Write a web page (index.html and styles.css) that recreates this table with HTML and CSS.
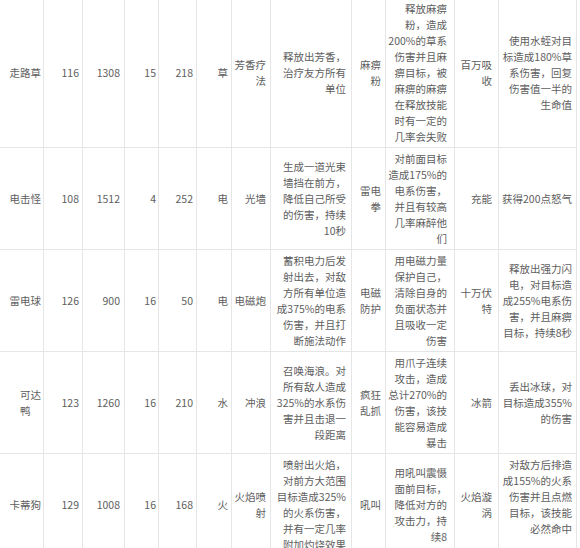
FILE: index.html
```html
<!DOCTYPE html>
<html lang="zh-CN">
<head>
<meta charset="utf-8">
<title>宠物技能表</title>
<link rel="stylesheet" href="styles.css">
</head>
<body>
<table class="pet-table">
<colgroup>
<col class="c1"><col class="c2"><col class="c3"><col class="c4"><col class="c5"><col class="c6"><col class="c7"><col class="c8"><col class="c9"><col class="c10"><col class="c11"><col class="c12">
</colgroup>
<tbody>
<tr>
<td>走路草</td><td>116</td><td>1308</td><td>15</td><td>218</td><td>草</td>
<td>芳香疗<br>法</td>
<td>释放出芳香，<br>治疗友方所有<br>单位</td>
<td>麻痹<br>粉</td>
<td>释放麻痹<br>粉，造成<br>200%的草系<br>伤害并且麻<br>痹目标，被<br>麻痹的麻痹<br>在释放技能<br>时有一定的<br>几率会失败</td>
<td>百万吸<br>收</td>
<td>使用水蛭对目<br>标造成180%草<br>系伤害，回复<br>伤害值一半的<br>生命值</td>
</tr>
<tr>
<td>电击怪</td><td>108</td><td>1512</td><td>4</td><td>252</td><td>电</td>
<td>光墙</td>
<td>生成一道光束<br>墙挡在前方，<br>降低自己所受<br>的伤害，持续<br>10秒</td>
<td>雷电<br>拳</td>
<td>对前面目标<br>造成175%的<br>电系伤害，<br>并且有较高<br>几率麻醉他<br>们</td>
<td>充能</td>
<td>获得200点怒气</td>
</tr>
<tr>
<td>雷电球</td><td>126</td><td>900</td><td>16</td><td>50</td><td>电</td>
<td>电磁炮</td>
<td>蓄积电力后发<br>射出去，对敌<br>方所有单位造<br>成375%的电系<br>伤害，并且打<br>断施法动作</td>
<td>电磁<br>防护</td>
<td>用电磁力量<br>保护自己，<br>清除自身的<br>负面状态并<br>且吸收一定<br>伤害</td>
<td>十万伏<br>特</td>
<td>释放出强力闪<br>电，对目标造<br>成255%电系伤<br>害，并且麻痹<br>目标，持续8秒</td>
</tr>
<tr>
<td>可达<br><span class="trail">鸭</span></td><td>123</td><td>1260</td><td>16</td><td>210</td><td>水</td>
<td>冲浪</td>
<td>召唤海浪。对<br>所有敌人造成<br>325%的水系伤<br>害并且击退一<br>段距离</td>
<td>疯狂<br>乱抓</td>
<td>用爪子连续<br>攻击，造成<br>总计270%的<br>伤害，该技<br>能容易造成<br>暴击</td>
<td>冰箭</td>
<td>丢出冰球，对<br>目标造成355%<br>的伤害</td>
</tr>
<tr>
<td>卡蒂狗</td><td>129</td><td>1008</td><td>16</td><td>168</td><td>火</td>
<td>火焰喷<br>射</td>
<td>喷射出火焰，<br>对前方大范围<br>目标造成325%<br>的火系伤害，<br>并有一定几率<br>附加灼烧效果</td>
<td>吼叫</td>
<td>用吼叫震慑<br>面前目标，<br>降低对方的<br>攻击力，持<br>续8</td>
<td>火焰漩<br>涡</td>
<td>对敌方后排造<br>成155%的火系<br>伤害并且点燃<br>目标，该技能<br>必然命中<br>&nbsp;</td>
</tr>
</tbody>
</table>
</body>
</html>
```

FILE: styles.css
```css
html, body {
  margin: 0;
  padding: 0;
  background: #ffffff;
}

body {
  font-family: "Noto Sans CJK SC", "Noto Sans", sans-serif;
  font-size: 10.5px;
  line-height: 16px;
  color: #5e5e5e;
  overflow: hidden;
}

.pet-table {
  border-collapse: separate;
  border-spacing: 0;
  table-layout: fixed;
  width: 577px;
  margin-top: -2px;
}

.pet-table .c1 { width: 44px; }
.pet-table .c2 { width: 39px; }
.pet-table .c3 { width: 42px; }
.pet-table .c4 { width: 34px; }
.pet-table .c5 { width: 38px; }
.pet-table .c6 { width: 35px; }
.pet-table .c7 { width: 39px; }
.pet-table .c8 { width: 81px; }
.pet-table .c9 { width: 34px; }
.pet-table .c10 { width: 69px; }
.pet-table .c11 { width: 44px; }
.pet-table .c12 { width: 78px; }

.pet-table td {
  box-sizing: border-box;
  border-right: 1px solid #e6e6e6;
  border-bottom: 1px solid #e6e6e6;
  padding: 3px 3px 2px 1px;
  text-align: right;
  vertical-align: middle;
  white-space: nowrap;
  overflow: hidden;
}

.pet-table td:nth-child(1) { padding-right: 2px; }
.pet-table td:nth-child(3) { padding-right: 4px; }
.pet-table td:nth-child(4) { padding-right: 2px; }
.pet-table td:nth-child(7) { padding-right: 4px; }
.pet-table td:nth-child(8) { padding-right: 5px; }
.pet-table td:nth-child(9) { padding-right: 4px; }
.pet-table td:nth-child(10) { padding-right: 7px; }
.pet-table td:nth-child(11) { padding-right: 6px; }
.pet-table td:nth-child(12) { padding-right: 4px; }

.pet-table .trail {
  display: inline-block;
  margin-right: 10.5px;
}
```
